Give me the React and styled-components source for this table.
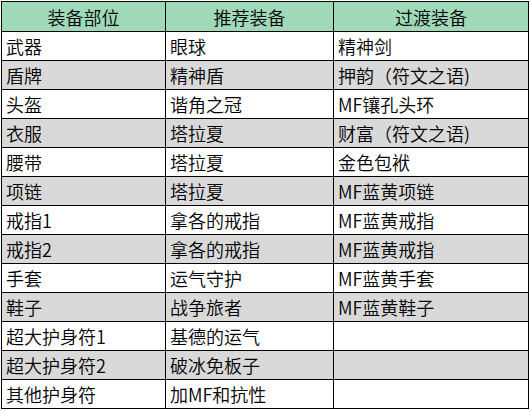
import React from "react";
import styled, { createGlobalStyle } from "styled-components";

const Global = createGlobalStyle`
  html, body { margin: 0; padding: 0; background: #fff; }
  body { font-family: "Noto Sans CJK SC", "Liberation Sans", sans-serif; }
`;

const Page = styled.div`
  padding: 1px 0 0 1px;
`;

const Grid = styled.div`
  display: grid;
  grid-template-columns: 164px 168px 195px;
  grid-template-rows: 30px;
  grid-auto-rows: 29px;
  width: 528px;
  border-left: 1px solid #000;
  border-top: 1px solid #000;
  box-sizing: border-box;
`;

const Cell = styled.div`
  box-sizing: border-box;
  border-right: 1px solid #000;
  border-bottom: 1px solid #000;
  display: flex;
  align-items: center;
  justify-content: ${(p) => (p.$head ? "center" : "flex-start")};
  padding-left: ${(p) => (p.$head ? "0" : "4px")};
  background: ${(p) => (p.$head ? "#9fd9b8" : p.$alt ? "#d9d9d9" : "#fff")};
  color: #000;
  font-size: 18px;
  font-weight: 350;
  line-height: 1;
  white-space: nowrap;
`;

const head = ["装备部位", "推荐装备", "过渡装备"];
const rows = [
  ["武器", "眼球", "精神剑"],
  ["盾牌", "精神盾", "押韵（符文之语)"],
  ["头盔", "谐角之冠", "MF镶孔头环"],
  ["衣服", "塔拉夏", "财富（符文之语)"],
  ["腰带", "塔拉夏", "金色包袱"],
  ["项链", "塔拉夏", "MF蓝黄项链"],
  ["戒指1", "拿各的戒指", "MF蓝黄戒指"],
  ["戒指2", "拿各的戒指", "MF蓝黄戒指"],
  ["手套", "运气守护", "MF蓝黄手套"],
  ["鞋子", "战争旅者", "MF蓝黄鞋子"],
  ["超大护身符1", "基德的运气", ""],
  ["超大护身符2", "破冰免板子", ""],
  ["其他护身符", "加MF和抗性", ""],
];

export default function App() {
  return (
    <Page>
      <Global />
      <Grid>
        {head.map((h) => (
          <Cell key={h} $head>
            {h}
          </Cell>
        ))}
        {rows.map((r, i) =>
          r.map((c, j) => (
            <Cell key={i + "-" + j} $alt={i % 2 === 1}>
              {c}
            </Cell>
          ))
        )}
      </Grid>
    </Page>
  );
}
